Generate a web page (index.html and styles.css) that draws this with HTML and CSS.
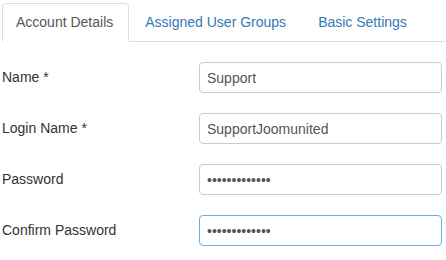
FILE: index.html
```html
<!DOCTYPE html>
<html lang="en">
<head>
    <meta charset="UTF-8">
    <meta name="viewport" content="width=device-width, initial-scale=1.0">
    <title>Edit User</title>
    <link rel="stylesheet" href="styles.css">
</head>
<body>

    <div class="container">
        <ul class="nav-tabs">
            <li class="active"><a href="#details">Account Details</a></li>
            <li><a href="#groups">Assigned User Groups</a></li>
            <li><a href="#settings">Basic Settings</a></li>
        </ul>

        <form id="userForm" class="tab-content">
            <div class="form-group">
                <label for="name">Name *</label>
                <input type="text" id="name" name="name" value="Support">
            </div>

            <div class="form-group">
                <label for="username">Login Name *</label>
                <input type="text" id="username" name="username" value="SupportJoomunited">
            </div>

            <div class="form-group">
                <label for="password">Password</label>
                <input type="password" id="password" name="password" value="abcdefghijklm">
            </div>

            <div class="form-group">
                <label for="password2">Confirm Password</label>
                <input type="password" id="password2" name="password2" value="abcdefghijklm" autofocus>
            </div>
        </form>
    </div>

</body>
</html>
```

FILE: styles.css
```css
/* Basic Reset */
* {
    margin: 0;
    padding: 0;
    box-sizing: border-box;
}

body {
    font-family: 'Liberation Sans', Arial, sans-serif;
    font-size: 14px;
    line-height: 20px;
    color: #333;
    background-color: #fff;
}

.container {
    padding: 3px 1px 0 2px;
}

/* Tabs */
.nav-tabs {
    list-style: none;
    display: flex;
    border-bottom: 1px solid #ddd;
}

.nav-tabs li {
    margin-bottom: -1px;
    margin-right: 2px;
}

.nav-tabs a {
    display: block;
    padding: 8px 15px 9px 13px;
    border: 1px solid transparent;
    border-radius: 4px 4px 0 0;
    color: #337ab7;
    text-decoration: none;
}

.nav-tabs .active a {
    color: #555;
    background-color: #fff;
    border-color: #ddd #ddd transparent #ddd;
}

/* Form */
.tab-content {
    margin-top: 20px;
    padding-right: 3px;
}

.form-group {
    display: flex;
    align-items: center;
    margin-bottom: 20px;
}

label {
    width: 197px;
    color: #333;
    padding-bottom: 2px;
}

input {
    flex: 1;
    height: 31px;
    padding: 4px 7px;
    border: 1px solid #ccc;
    border-radius: 4px;
    font-family: inherit;
    font-size: 14px;
    color: #555;
    background-color: #fff;
}

input:focus {
    outline: none;
    border-color: #66afe9;
    caret-color: #333;
}
```
